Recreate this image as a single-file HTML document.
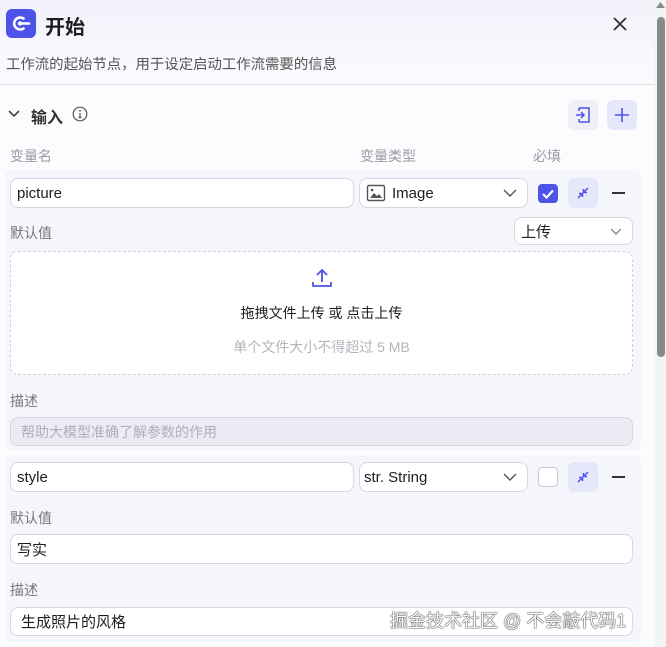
<!DOCTYPE html>
<html><head><meta charset="utf-8"><style>
*{box-sizing:border-box;margin:0;padding:0}
body{width:666px;height:647px;overflow:hidden;background:#fcfcfe;font-family:"Liberation Sans","Noto Sans CJK SC",sans-serif;position:relative;color:#1c1d23}
.a{position:absolute}
.hdr{left:0;top:0;width:654px;height:84px;background:linear-gradient(#f1f1fb,#fbfbfe)}
.lbl{font-size:14px;color:#8a8b93}
.inp{position:absolute;background:#fff;border:1px solid #d6d7e0;border-radius:8px;font-size:15px;padding-left:6px;display:flex;align-items:center;color:#1c1d23}
.blk{position:absolute;left:5px;width:636px;background:#f5f6fb;border-radius:6px}
.btn{position:absolute;border-radius:6px;display:flex;align-items:center;justify-content:center}
.chev{position:absolute;right:10px;top:8px}
</style></head><body>
<div class="a hdr"></div>
<div class="a" style="left:6px;top:9px;width:30px;height:29px;background:#4d53e8;border-radius:6px">
<svg width="30" height="29" viewBox="0 0 30 29"><path d="M17.5 9.5a6 6 0 1 0 0 10" fill="none" stroke="#fff" stroke-width="2.6" stroke-linecap="round"/><circle cx="14" cy="14.5" r="2.2" fill="#fff"/><path d="M14 14.5h9" stroke="#fff" stroke-width="2.6" stroke-linecap="round"/></svg></div>
<div class="a" style="left:45px;top:11px;font-size:20px;font-weight:bold;color:#1c1d23">开始</div>
<svg class="a" style="left:612px;top:16px" width="16" height="16"><path d="M2 2L14 14M14 2L2 14" stroke="#333" stroke-width="1.8"/></svg>
<div class="a" style="left:6px;top:53px;font-size:14.4px;color:#555">工作流的起始节点，用于设定启动工作流需要的信息</div>
<div class="a" style="left:0;top:84px;width:654px;height:1px;background:#dcdde3"></div>
<svg class="a" style="left:8px;top:109px" width="12" height="10"><path d="M1 2l5 5 5-5" fill="none" stroke="#444" stroke-width="1.6"/></svg>
<div class="a" style="left:31px;top:104px;font-size:16px;font-weight:bold;color:#333">输入</div>
<svg class="a" style="left:72px;top:106px" width="16" height="16"><circle cx="8" cy="8" r="6.8" fill="none" stroke="#555" stroke-width="1.2"/><path d="M8 7v4.5M6.5 11.5h3" stroke="#555" stroke-width="1.2"/><circle cx="8" cy="4.8" r=".9" fill="#555"/></svg>
<div class="btn" style="left:568px;top:100px;width:30px;height:30px;background:#eef0f6"><svg width="18" height="18"><path d="M5 2h10v14H5M5 2v3M5 13v3M2 9h8M7 6l3 3-3 3" fill="none" stroke="#4d53e8" stroke-width="1.5"/></svg></div>
<div class="btn" style="left:607px;top:100px;width:30px;height:30px;background:#e6e7fb"><svg width="16" height="16"><path d="M8 1v14M1 8h14" stroke="#4d53e8" stroke-width="1.6"/></svg></div>
<div class="a lbl" style="left:10px;top:146px;color:#9a9ba3">变量名</div>
<div class="a lbl" style="left:360px;top:146px;color:#9a9ba3">变量类型</div>
<div class="a lbl" style="left:533px;top:146px;color:#9a9ba3">必填</div>

<div class="blk" style="top:170px;height:280px"></div>
<div class="blk" style="top:456px;height:186px"></div>

<div class="inp" style="left:10px;top:178px;width:344px;height:30px">picture</div>
<div class="inp" style="left:359px;top:178px;width:169px;height:30px"><svg width="20" height="18" style="margin-right:6px"><rect x="1.5" y="1.5" width="17" height="15" rx="1.5" fill="none" stroke="#555" stroke-width="1.4"/><path d="M4 14l4-5 3 3 2-2 3 4z" fill="#555"/><circle cx="6" cy="6" r="1.3" fill="#555"/></svg>Image<svg class="chev" width="14" height="12"><path d="M1 3l6 6 6-6" fill="none" stroke="#555" stroke-width="1.4"/></svg></div>
<div class="a" style="left:538px;top:184px;width:20px;height:19px;background:#4d53e8;border-radius:4px"><svg width="20" height="19"><path d="M5 10l3.5 3.5L15 6.5" fill="none" stroke="#fff" stroke-width="2.2"/></svg></div>
<div class="btn" style="left:568px;top:178px;width:30px;height:30px;background:#e6e7fb"><svg width="14" height="14"><path d="M2 12l4-4M3 7.5h3.5V11M12 2l-4 4M11 6.5H7.5V3" fill="none" stroke="#4d53e8" stroke-width="1.5"/></svg></div>
<div class="a" style="left:612px;top:192px;width:13px;height:2px;background:#333"></div>
<div class="a lbl" style="left:10px;top:223px;color:#777">默认值</div>
<div class="inp" style="left:514px;top:217px;width:119px;height:28px">上传<svg class="chev" width="12" height="10" style="top:9px"><path d="M1 2l5 5 5-5" fill="none" stroke="#777" stroke-width="1.2"/></svg></div>
<div class="a" style="left:10px;top:251px;width:623px;height:124px;background:#fff;border:1px dashed #cfd0d8;border-radius:8px"></div>
<svg class="a" style="left:311px;top:267px" width="22" height="22"><path d="M11 15V3M6 8l5-5 5 5M2 15v4h18v-4" fill="none" stroke="#4d53e8" stroke-width="1.8"/></svg>
<div class="a" style="left:0;width:643px;top:303px;text-align:center;font-size:14px;color:#1c1d23">拖拽文件上传 或 点击上传</div>
<div class="a" style="left:0;width:643px;top:337px;text-align:center;font-size:14px;color:#b4b5bc">单个文件大小不得超过 5 MB</div>
<div class="a lbl" style="left:10px;top:391px;color:#777">描述</div>
<div class="inp" style="left:10px;top:417px;width:623px;height:29px;background:#ebecf3;color:#aeafb7;font-size:14px;padding-left:10px">帮助大模型准确了解参数的作用</div>

<div class="inp" style="left:10px;top:462px;width:344px;height:30px">style</div>
<div class="inp" style="left:359px;top:462px;width:169px;height:30px;padding-left:4px">str. String<svg class="chev" width="14" height="12"><path d="M1 3l6 6 6-6" fill="none" stroke="#555" stroke-width="1.4"/></svg></div>
<div class="a" style="left:538px;top:467px;width:20px;height:20px;background:#fff;border:1px solid #c8c9d2;border-radius:4px"></div>
<div class="btn" style="left:568px;top:462px;width:30px;height:30px;background:#e6e7fb"><svg width="14" height="14"><path d="M2 12l4-4M3 7.5h3.5V11M12 2l-4 4M11 6.5H7.5V3" fill="none" stroke="#4d53e8" stroke-width="1.5"/></svg></div>
<div class="a" style="left:612px;top:476px;width:13px;height:2px;background:#333"></div>
<div class="a lbl" style="left:10px;top:508px;color:#777">默认值</div>
<div class="inp" style="left:10px;top:534px;width:623px;height:30px">写实</div>
<div class="a lbl" style="left:10px;top:580px;color:#777">描述</div>
<div class="inp" style="left:10px;top:607px;width:623px;height:29px;padding-left:10px">生成照片的风格</div>
<div class="a" style="left:390px;top:607px;font-size:18px;color:#fff;text-shadow:0 0 1px #333,0 0 1px #333,0 0 1px #333">掘金技术社区 @ 不会敲代码1</div>

<div class="a" style="left:654px;top:0;width:12px;height:647px;background:#f4f4f4"></div>
<svg class="a" style="left:656px;top:2px" width="9" height="6"><path d="M4.5 0L9 6H0z" fill="#8a8a8a"/></svg>
<div class="a" style="left:657px;top:17px;width:8px;height:340px;background:#8a8a8a;border-radius:4px"></div>
</body></html>
